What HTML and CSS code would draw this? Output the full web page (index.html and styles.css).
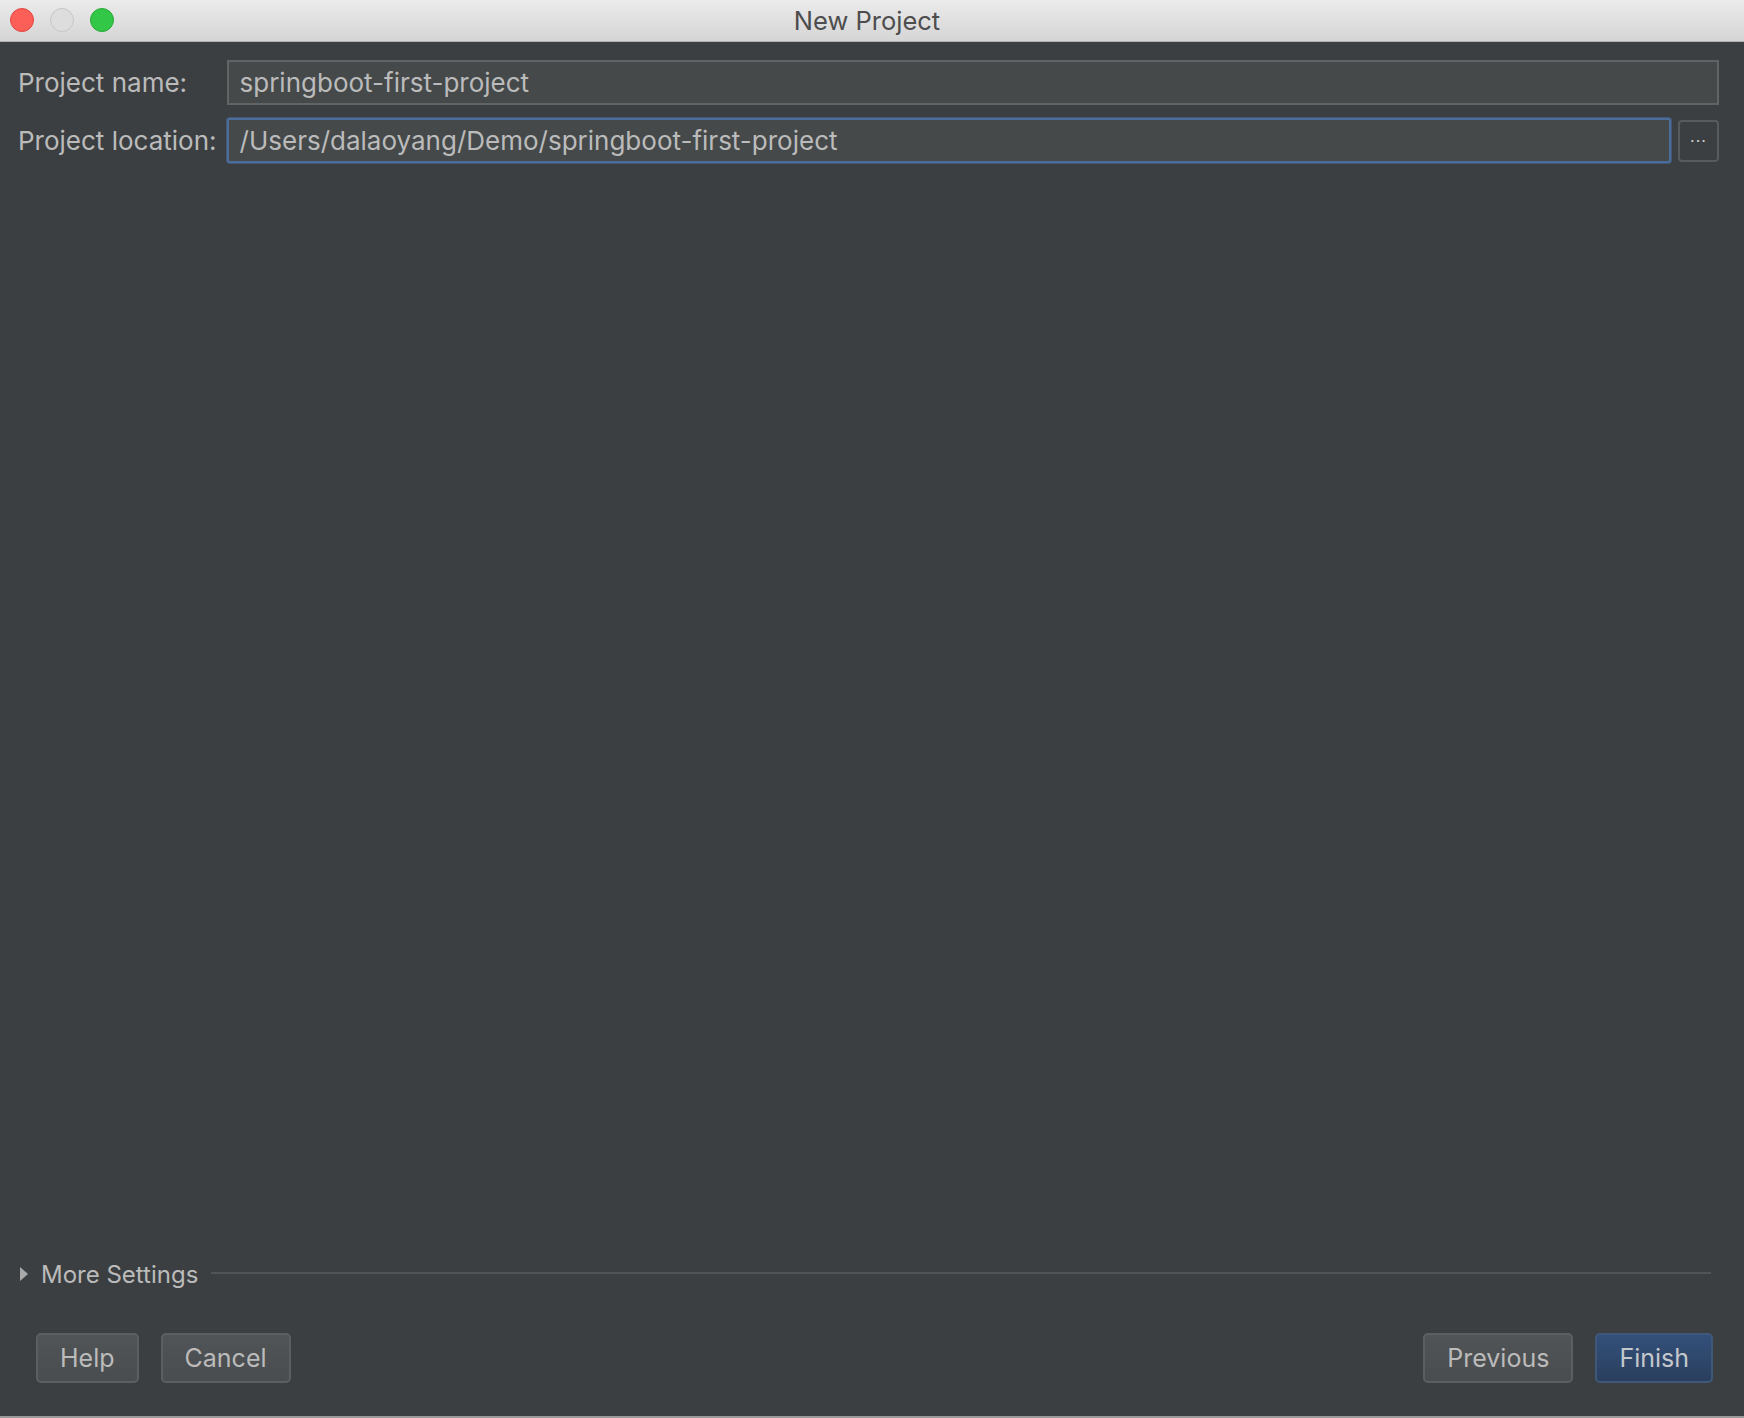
FILE: index.html
```html
<!DOCTYPE html>
<html lang="en">
<head>
  <meta charset="UTF-8" />
  <title>New Project</title>
  <link rel="stylesheet" href="styles.css">
</head>
<body>
  <div class="window">
    <div class="titlebar">
      <div class="lights">
        <span class="light close"></span>
        <span class="light min"></span>
        <span class="light max"></span>
      </div>
      <div class="title">New Project</div>
    </div>

    <div class="content">
      <div class="form">
        <label class="label" for="projectName">Project name:</label>
        <input class="field wide" id="projectName" type="text" value="springboot-first-project" />

        <label class="label" for="projectLocation">Project location:</label>
        <input class="field focused" id="projectLocation" type="text" value="/Users/dalaoyang/Demo/springboot-first-project" />
        <button class="browse">&middot;&middot;&middot;</button>
      </div>
    </div>

    <div class="more-settings">
      <span class="arrow"></span>
      <span class="more-label">More Settings</span>
      <span class="divider"></span>
    </div>

    <div class="buttons">
      <div class="btn-group">
        <button class="btn">Help</button>
        <button class="btn">Cancel</button>
      </div>
      <div class="btn-group">
        <button class="btn">Previous</button>
        <button class="btn primary">Finish</button>
      </div>
    </div>

    <div class="bottom-edge"></div>
  </div>
</body>
</html>
```

FILE: styles.css
```css
:root {
  --bg: #3c3f41;
  --field-bg: #45494a;
  --field-border: #616465;
  --text: #bbbbbb;
  --focus: #4a6d9c;
}
* {
  box-sizing: border-box;
}
html, body {
  margin: 0;
  height: 100%;
}
body {
  font-family: Inter, "Liberation Sans", sans-serif;
  background: var(--bg);
  color: var(--text);
  overflow: hidden;
}
.window {
  display: flex;
  flex-direction: column;
  height: 100vh;
}

/* title bar */
.titlebar {
  position: relative;
  height: 42px;
  flex: none;
  background: linear-gradient(to bottom, #ebebeb, #d5d5d5);
  border-bottom: 1px solid #b1b1b1;
  display: flex;
  align-items: center;
  justify-content: center;
}
.lights {
  position: absolute;
  left: 10px;
  top: 8px;
  display: flex;
  gap: 16px;
}
.light {
  width: 24px;
  height: 24px;
  border-radius: 50%;
  border: 1px solid transparent;
}
.light.close {
  background: #fc5f57;
  border-color: #e2463f;
}
.light.min {
  background: #dddddd;
  border-color: #c6c6c6;
}
.light.max {
  background: #33c748;
  border-color: #27aa35;
}
.title {
  font-size: 25.5px;
  color: #4d4d4d;
  margin-left: -10px;
}

/* form */
.content {
  flex: 1;
  padding: 18px 25px 0 18px;
}
.form {
  display: grid;
  grid-template-columns: auto 1fr 41px;
  column-gap: 7px;
  row-gap: 13px;
  align-items: center;
}
.label {
  font-size: 26px;
  margin-right: 3px;
  white-space: nowrap;
}
.field {
  height: 45px;
  background: var(--field-bg);
  border: 2px solid var(--field-border);
  color: var(--text);
  font-family: inherit;
  font-size: 26px;
  padding: 0 11px;
  outline: none;
}
.field.wide {
  grid-column: 2 / 4;
}
.field.focused {
  border-color: var(--focus);
  border-radius: 3px;
  box-shadow: 0 0 0 1px rgba(74, 109, 156, 0.55);
}
.browse {
  height: 42px;
  width: 41px;
  background: var(--bg);
  border: 2px solid #585b5d;
  border-radius: 4px;
  color: #cfcfcf;
  font-size: 16px;
  letter-spacing: 1px;
  padding: 0;
  font-family: inherit;
}

/* more settings */
.more-settings {
  display: flex;
  align-items: center;
  height: 30px;
  padding: 0 33px 0 20px;
}
.arrow {
  width: 0;
  height: 0;
  border-top: 7px solid transparent;
  border-bottom: 7px solid transparent;
  border-left: 8px solid #a9a9a9;
}
.more-label {
  font-size: 24px;
  margin-left: 13px;
}
.divider {
  flex: 1;
  height: 2px;
  background: #515456;
  margin-left: 13px;
  margin-top: -2px;
}

/* bottom buttons */
.buttons {
  display: flex;
  justify-content: space-between;
  padding: 44px 31px 33px 36px;
}
.btn-group {
  display: flex;
  gap: 22px;
}
.btn {
  height: 50px;
  padding: 0 22px;
  font-family: inherit;
  font-size: 25px;
  color: var(--text);
  background: linear-gradient(to bottom, #505456, #4a4d4f);
  border: 2px solid #5c5f61;
  border-radius: 5px;
}
.btn.primary {
  background: linear-gradient(to bottom, #33507a, #2a3f5e);
  border-color: #3f5778;
  color: #c4c8cc;
}
.bottom-edge {
  height: 2px;
  flex: none;
  background: #9a9a9a;
}
```
